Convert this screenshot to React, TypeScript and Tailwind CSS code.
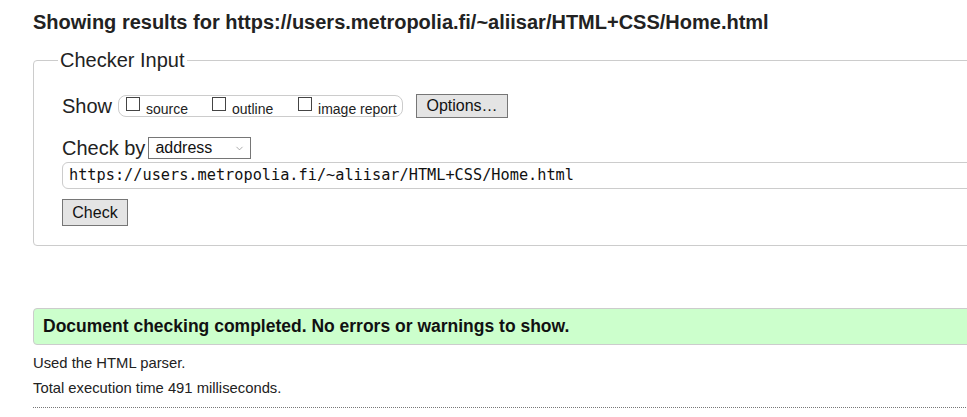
import { ChevronDown } from 'lucide-react';

const font = { fontFamily: '"Liberation Sans", Arial, sans-serif' };

function Box({ label }: { label: string }) {
  return (
    <label className="flex items-start">
      <span className="mt-[1px] w-[14px] h-[14px] border border-[#444] bg-white" />
      <span className="ml-[6px] text-[14px] leading-[16px] text-[#222] mt-[5px]">{label}</span>
    </label>
  );
}

export default function App() {
  return (
    <div className="w-[967px] h-[417px] overflow-hidden bg-white text-[#222]" style={font}>
      <div className="w-[1100px] pl-[33px] pt-[10px]">
        <h2 className="text-[20px] leading-[24px] font-bold text-[#222]">
          Showing results for https://users.metropolia.fi/~aliisar/HTML+CSS/Home.html
        </h2>

        <fieldset className="mt-[14px] border border-[#ccc] rounded-[4px] pl-[24px] pr-4 pb-[19px] pt-[22px]">
          <legend className="px-[2px] text-[20px] leading-[24px] text-[#222]">Checker Input</legend>

          <div className="pl-[4px]">
            <div className="flex items-center h-[24px]">
              <span className="text-[20px] leading-[24px]">Show</span>
              <div className="ml-[6px] flex items-center h-[22px] w-[285px] border border-[#ccc] rounded-[8px] pl-[7px]">
                <div className="w-[86px]"><Box label="source" /></div>
                <div className="w-[86px]"><Box label="outline" /></div>
                <Box label="image report" />
              </div>
              <button className="ml-[13px] h-[24px] w-[92px] border border-[#767676] bg-[#e4e4e4] text-[16px] leading-[20px] text-[#111]">
                Options…
              </button>
            </div>

            <div className="flex items-center mt-[19px] h-[22px]">
              <span className="text-[20px] leading-[24px]">Check by</span>
              <div className="ml-[3px] flex items-center justify-between h-[22px] w-[103px] border border-[#767676] pl-[6px] pr-[5px]">
                <span className="text-[16px] leading-[18px] text-[#111]">address</span>
                <ChevronDown size={11} strokeWidth={1.5} className="text-[#888]" />
              </div>
            </div>

            <div
              className="mt-[3px] h-[27px] border border-[#ccc] rounded-[6px] pl-[6px] flex items-center text-[15.25px] text-[#111]"
              style={{ fontFamily: '"DejaVu Sans Mono", monospace' }}
            >
              https://users.metropolia.fi/~aliisar/HTML+CSS/Home.html
            </div>

            <button className="mt-[10px] h-[27px] w-[66px] border border-[#767676] bg-[#e4e4e4] text-[16px] leading-[20px] text-[#111]">
              Check
            </button>
          </div>
        </fieldset>

        <div className="mt-[62px] h-[37px] border border-[#ccc] rounded-[4px] bg-[#ccffcc] pl-[9px] flex items-center">
          <p className="text-[17.5px] font-bold text-[#111]">Document checking completed. No errors or warnings to show.</p>
        </div>

        <p className="mt-[9px] text-[14.8px] leading-[18px] text-[#222]">Used the HTML parser.</p>
        <p className="mt-[7px] text-[14.8px] leading-[18px] text-[#222]">Total execution time 491 milliseconds.</p>
        <div className="mt-[10px] border-t border-dotted border-[#777]" />
      </div>
    </div>
  );
}
